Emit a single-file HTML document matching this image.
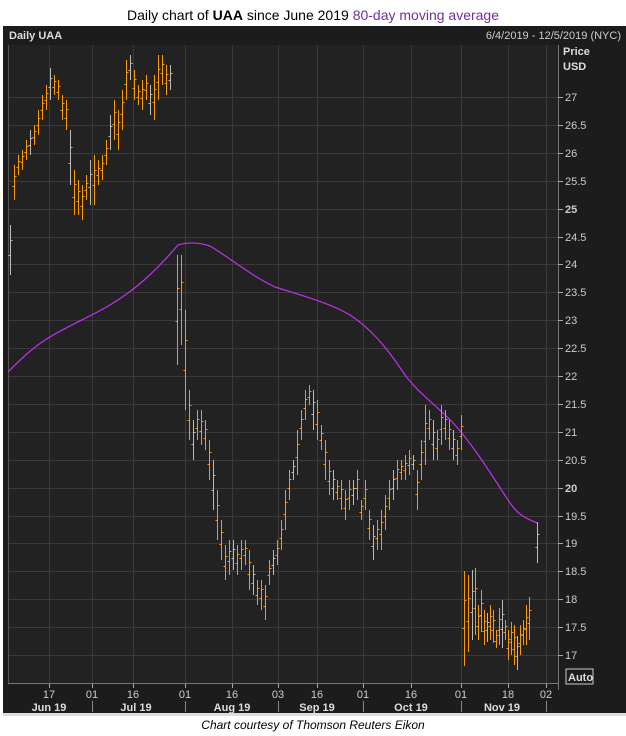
<!DOCTYPE html>
<html><head><meta charset="utf-8">
<style>
html,body{margin:0;padding:0;background:#fff;width:626px;height:736px;overflow:hidden}
body{font-family:"Liberation Sans",sans-serif;position:relative}
.t{position:absolute;left:0;width:626px;text-align:center;top:7px;font-size:14px;color:#000}
.cap{position:absolute;left:0;width:626px;text-align:center;top:718px;font-size:12px;font-style:italic;color:#000}
svg{position:absolute;left:0;top:0}
</style></head><body>
<div class="t">Daily chart of <b>UAA</b> since June 2019 <span style="color:#7030a0">80-day moving average</span></div>
<svg width="626" height="736" id="s" font-family="Liberation Sans, sans-serif">
<rect x="3" y="26" width="623" height="687" fill="#1c1c1c"/>
<rect x="8" y="45" width="550" height="638" fill="#222"/>
<g id="grid" stroke="#3a3a3a" stroke-width="1"></g>
<line x1="8" y1="683.5" x2="558" y2="683.5" stroke="#777"/>
<line x1="558.5" y1="45" x2="558.5" y2="690" stroke="#777"/>
<line x1="8.5" y1="45" x2="8.5" y2="683" stroke="#555"/>
<text x="9" y="39" fill="#ddd" font-size="11" font-weight="bold">Daily UAA</text>
<text x="621" y="39" fill="#ccc" font-size="11" text-anchor="end">6/4/2019 - 12/5/2019 (NYC)</text>
<text x="563" y="55" fill="#ddd" font-size="11" font-weight="bold">Price</text>
<text x="563" y="70" fill="#ddd" font-size="11" font-weight="bold">USD</text>
<g id="ylab" fill="#ccc" font-size="11"></g>
<path id="ma" fill="none" stroke="#c030f0" stroke-width="1.2" d="M8,372 C20,360 30,350 45,340 C65,327 90,317 110,305 C135,290 155,272 178,245 C188,242 198,242 210,246 C230,258 250,275 275,287 C300,295 330,303 350,315 C370,328 385,345 405,375 C420,395 440,408 455,425 C470,442 482,460 495,480 C505,495 512,508 520,514 C528,520 533,521 537,523"/>
<g id="bars" stroke-width="1"></g>
<rect x="566" y="669" width="27" height="15" fill="none" stroke="#ccc"/>
<text x="568" y="681" fill="#ddd" font-size="11" font-weight="bold">Auto</text>
<g id="xlab" fill="#ccc" font-size="11" text-anchor="middle"></g>
<rect x="3" y="713" width="623" height="3" fill="#ddd"/>
</svg>
<div class="cap">Chart courtesy of Thomson Reuters Eikon</div>
<script>
var NS="http://www.w3.org/2000/svg";
function el(p,t,a,txt){var e=document.createElementNS(NS,t);for(var k in a)e.setAttribute(k,a[k]);if(txt)e.textContent=txt;document.getElementById(p).appendChild(e);return e;}
var vx=[49,92,133,185,232,278,317,363,411,461,508,546];
vx.forEach(function(x){el("grid","line",{x1:x+.5,y1:45,x2:x+.5,y2:683});el("xlab","line",{x1:x+.5,y1:684,x2:x+.5,y2:688,stroke:"#aaa"});});
var dl=["17","01","16","01","16","03","16","01","16","01","18","02"];
vx.forEach(function(x,i){el("xlab","text",{x:x,y:698},dl[i]);});
[92,185,278,363,461,546].forEach(function(x){el("xlab","line",{x1:x+.5,y1:701,x2:x+.5,y2:712,stroke:"#888"});});
[["Jun 19",49],["Jul 19",136],["Aug 19",232],["Sep 19",317],["Oct 19",411],["Nov 19",502]].forEach(function(m){el("xlab","text",{x:m[1],y:711,"font-weight":"bold",fill:"#ddd"},m[0]);});
for(var p=17;p<=27.01;p+=0.5){var y=97+(27-p)*55.8;el("grid","line",{x1:8,y1:Math.round(y)+.5,x2:558,y2:Math.round(y)+.5});el("ylab","line",{x1:558,y1:Math.round(y)+.5,x2:563,y2:Math.round(y)+.5,stroke:"#aaa"});var t=el("ylab","text",{x:565,y:Math.round(y)+4},(p%1?p.toFixed(1):String(p)));if(p==25||p==20)t.setAttribute("font-weight","bold");}
var B=[[10,225,275],[14,165,200],[18,155,175],[22,150,170],[26,140,160],[30,130,155],[34,125,145],[38,110,135],[42,95,120],[46,85,110],[50,68,100],[54,75,95],[58,80,100],[62,95,120],[66,100,130],[70,130,185],[74,170,215],[78,180,215],[82,185,220],[86,175,200],[90,160,205],[94,155,205],[98,160,185],[102,155,180],[106,140,165],[110,115,150],[114,100,140],[118,110,150],[122,90,130],[126,60,100],[130,55,80],[134,70,100],[138,85,105],[142,80,110],[146,75,100],[150,85,115],[154,75,120],[158,55,100],[162,55,85],[166,65,95],[170,65,90],
[177,255,365],[181,255,345],[185,310,410],[189,390,440],[193,420,460],[197,410,440],[201,410,445],[205,420,450],[209,440,480],[213,460,510],[217,490,540],[221,520,560],[225,545,580],[229,540,575],[233,540,570],[237,545,575],[241,540,570],[245,540,565],[249,550,590],[253,565,595],[257,580,605],[261,580,610],[265,585,620],[269,560,585],[273,550,575],[277,540,565],[281,520,550],[285,490,530],[289,470,500],[293,460,480],[297,430,475],[301,410,440],[305,390,420],[309,385,405],[313,390,430],[317,400,440],[321,425,450],[325,440,480],[329,460,495],[333,470,500],[337,480,500],[341,480,510],[345,490,520],[349,480,510],[353,480,505],[357,470,500],[361,500,520],[365,480,510],[369,510,540],[373,525,560],[377,520,550],[381,510,550],[385,495,530],[389,480,510],[393,470,500],[397,460,490],[401,460,480],[405,455,480],[409,450,475],[413,455,470],[417,470,510],[421,440,480],[425,405,465],[429,410,440],[433,420,460],[437,430,460],[441,405,445],[445,410,440],[449,420,450],[453,430,460],[457,440,465],[461,415,450],
[464,571,666],[468,575,652],[472,570,640],[475,568,635],[478,605,640],[481,590,632],[484,610,645],[487,613,642],[490,605,640],[493,610,643],[496,630,648],[499,608,645],[502,600,648],[505,620,640],[508,630,660],[511,622,655],[514,625,665],[517,636,670],[520,625,655],[523,620,645],[526,605,645],[529,597,640],[537,522,563]];
B.forEach(function(b,i){var up=(i*7%5==0);var c=up?"#bbb":"#ff9900";var x=b[0]+.5;el("bars","line",{x1:x,y1:b[1],x2:x,y2:b[2],stroke:c});var o=b[1]+(b[2]-b[1])*0.6,cl=b[1]+(b[2]-b[1])*0.3;el("bars","line",{x1:x-2,y1:Math.round(o)+.5,x2:x,y2:Math.round(o)+.5,stroke:c});el("bars","line",{x1:x,y1:Math.round(cl)+.5,x2:x+2,y2:Math.round(cl)+.5,stroke:c});});
</script>
</body></html>
